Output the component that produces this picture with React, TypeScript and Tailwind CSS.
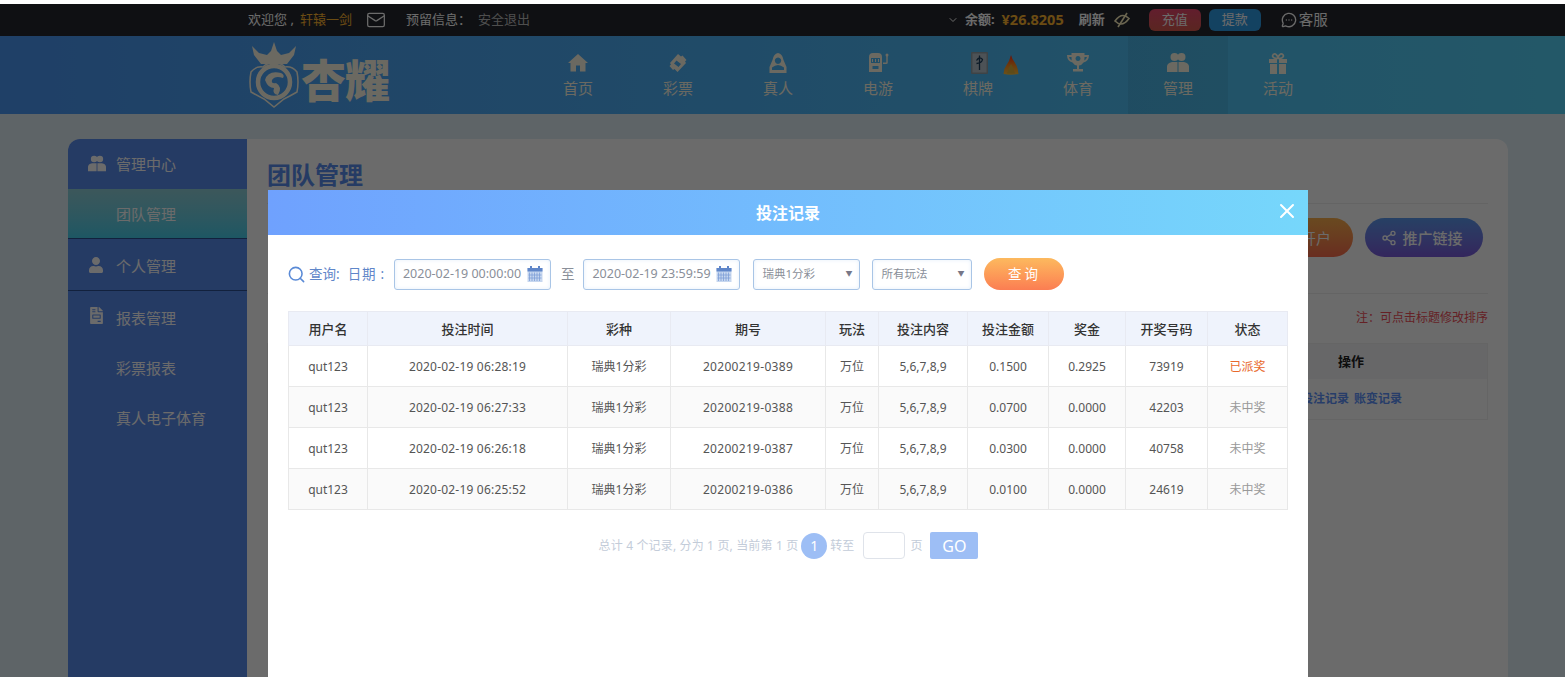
import React from "react";
import { ChevronDown, Mail, MessageCircleMore, Search, Share2, X } from "lucide-react";
import { FaUser, FaFileInvoice } from "react-icons/fa";

const HomeIcon = () => (
   <svg width="20" height="20" viewBox="0 0 20 20" fill="currentColor">
      <path d="M10 1 L20 10 L17.5 10 V18.5 H12 V12.5 H8 V18.5 H2.5 V10 H0 Z" />
   </svg>
);

const TicketIcon = () => (
   <svg width="20" height="20" viewBox="0 0 20 20" fill="currentColor">
      <path d="M10 1 L13 3.5 L14.5 2.5 L18.5 7 L17 8.5 L18 10 L9.5 19 L6.5 16 L5 17 L1.5 13 L3 11.5 L2 10 Z M8.5 7.5 L6 10.5 L10.5 14 L13 11 Z" fillRule="evenodd" />
   </svg>
);

const LiveIcon = () => (
   <svg width="18" height="21" viewBox="0 0 18 21" fill="currentColor">
      <path d="M9 0 Q13.5 1 14.5 7 L17.5 14 V20 H0.5 V14 L3.5 7 Q4.5 1 9 0 Z M9 4.5 a3.2 3.2 0 1 0 .01 0 Z M3 14.5 Q9 9.5 15 14.5 V17 H3 Z" fillRule="evenodd" />
   </svg>
);

const SlotIcon = () => (
   <svg width="22" height="20" viewBox="0 0 22 20" fill="currentColor">
      <path d="M2 4 Q2 0 6 0 H11 Q15 0 15 4 V19 H2 Z M4 5 V10 H13 V5 Z M5.5 13 V16 H11.5 V13 Z" fillRule="evenodd" />
      <path d="M5.5 6 V9 M8.5 6 V9 M11.5 6 V9" stroke="currentColor" strokeWidth="1" />
      <circle cx="20" cy="2" r="1.5" />
      <path d="M19.3 3 H20.7 V10 Q20.7 11 19 11 H16 V9.5 H19.3 Z" />
   </svg>
);

const CardIcon = () => (
   <svg width="17" height="22" viewBox="0 0 17 22" className="ml-[3px]">
      <rect x="0" y="0" width="17" height="22" rx="1" fill="#93a0a8" />
      <rect x="1.5" y="1.5" width="14" height="19" fill="#b8c4cc" />
      <path d="M8.5 3.5 V18 M5.5 8.5 Q8.5 4 11.5 7.5 Q11 11 5.5 11.5" stroke="#1d3f5e" strokeWidth="1.3" fill="none" />
   </svg>
);

const FlameIcon = () => (
   <svg width="16" height="20" viewBox="0 0 16 20" className="absolute top-[3px] left-[35px]">
      <defs>
         <linearGradient id="flame" x1="0" y1="0" x2="0" y2="1">
            <stop offset="0" stopColor="#ff2d1a" />
            <stop offset="0.5" stopColor="#ff8a1f" />
            <stop offset="1" stopColor="#ffc43a" />
         </linearGradient>
      </defs>
      <path d="M8 0 Q9 4 11.5 7 Q15 12 15.5 19 Q8 20.5 0.5 19 Q0.5 14 3.5 10 Q6.5 6 8 0 Z" fill="url(#flame)" />
      <path d="M8 9 Q11 13 12 18.5 H4 Q5 13 8 9 Z" fill="#e0b23a" />
   </svg>
);

const TrophyIcon = () => (
   <svg width="22" height="20" viewBox="0 0 22 20" fill="currentColor">
      <path d="M4.5 0 H17.5 V2 H22 Q22 8 16.5 9.5 Q15 12 12 12.5 V16 H16 V18.5 H6 V16 H10 V12.5 Q7 12 5.5 9.5 Q0 8 0 2 H4.5 Z M2 4 Q2.5 6.5 4.7 7.5 L4.5 4 Z M20 4 H17.5 L17.3 7.5 Q19.5 6.5 20 4 Z M11 3 a2.5 2.5 0 1 0 .01 0 Z" fillRule="evenodd" />
   </svg>
);

const UsersIcon = ({ size = 22 }: { size?: number }) => (
   <svg width={size} height={size} viewBox="0 0 22 22" fill="currentColor">
      <circle cx="7.5" cy="5" r="4" />
      <circle cx="14.5" cy="5" r="4" />
      <path d="M5 10 H10.5 V20 H0 V14.5 Q0 11 5 10 Z M11.5 10 H17 Q22 11 22 14.5 V20 H11.5 Z" />
   </svg>
);

const GiftIcon = () => (
   <svg width="20" height="21" viewBox="0 0 20 21" fill="currentColor">
      <path d="M1 6 H9 V10 H1 Z M11 6 H19 V10 H11 Z M2 11 H9 V21 H2 Z M11 11 H18 V21 H11 Z" />
      <path d="M10 5.5 Q5 5.5 4.5 3 Q5 0.5 7.5 1 Q9.5 2 10 5.5 Q10.5 2 12.5 1 Q15 0.5 15.5 3 Q15 5.5 10 5.5" fill="none" stroke="currentColor" strokeWidth="1.6" />
   </svg>
);

const SlashedEye = () => (
   <svg width="16" height="16" viewBox="0 0 16 16" fill="none" stroke="#fff2c0" strokeWidth="1.6" className="ml-[9px]">
      <path d="M1 9 Q5 3.5 9 3.5 Q12 3.5 15 6.5 Q11 12 7 12 Q4 12 1 9 Z" />
      <path d="M4 15 L13 1" />
   </svg>
);

const CalendarIcon = () => (
   <svg width="16" height="16" viewBox="0 0 16 16" className="text-[#5f86c9]">
      <rect x="0.5" y="2" width="15" height="14" fill="#c7d7ef" />
      <rect x="0.5" y="2" width="15" height="3.5" fill="currentColor" />
      <rect x="3" y="0" width="2" height="4" fill="currentColor" />
      <rect x="11" y="0" width="2" height="4" fill="currentColor" />
      <path d="M2.5 6.5 V15 M5 6.5 V15 M7.5 6.5 V15 M10 6.5 V15 M12.5 6.5 V15 M1.5 9 H14.5 M1.5 12 H14.5" stroke="#7d9fd8" strokeWidth="0.8" />
   </svg>
);

const Logo = () => (
   <div className="flex items-start text-[#fffbe8]">
      <svg width="52" height="66" viewBox="0 0 52 66" fill="none" stroke="currentColor" className="shrink-0">
         <path d="M26 0 L29 9 L33 13 L41 11 L48 4 L46 13 L39 22 H13 L6 13 L4 4 L11 11 L19 13 L23 9 Z" fill="currentColor" stroke="none" />
         <path d="M26 20 Q33 21 37 25 Q44 24 49 30 Q51 40 49 50 Q42 54 36 57 L26 65 L16 57 Q10 54 3 50 Q1 40 3 30 Q8 24 15 25 Q19 21 26 20 Z" strokeWidth="1.5" />
         <circle cx="26" cy="40" r="16" strokeWidth="4.5" />
         <path d="M17 38 Q20 28 33 31 Q37 33 35 36 Q27 33 24 38 Q23 42 28 41 Q35 45 30 53 Q24 52 26 46 Q20 46 17 38 Z" fill="currentColor" stroke="none" />
      </svg>
      <span className="mt-[16px] ml-[1px] text-[45px] leading-[46px] font-black tracking-[-1px]">杏耀</span>
   </div>
);

const navItems: { label: string; icon: React.ReactNode; active?: boolean }[] = [
   { label: "首页", icon: <HomeIcon /> },
   { label: "彩票", icon: <TicketIcon /> },
   { label: "真人", icon: <LiveIcon /> },
   { label: "电游", icon: <SlotIcon /> },
   {
      label: "棋牌",
      icon: (
         <span className="relative block">
            <CardIcon />
            <FlameIcon />
         </span>
      ),
   },
   { label: "体育", icon: <TrophyIcon /> },
   { label: "管理", icon: <UsersIcon />, active: true },
   { label: "活动", icon: <GiftIcon /> },
];

const rows = [
   ["2020-02-19 06:28:19", "20200219-0389", "0.1500", "0.2925", "73919", "已派奖"],
   ["2020-02-19 06:27:33", "20200219-0388", "0.0700", "0.0000", "42203", "未中奖"],
   ["2020-02-19 06:26:18", "20200219-0387", "0.0300", "0.0000", "40758", "未中奖"],
   ["2020-02-19 06:25:52", "20200219-0386", "0.0100", "0.0000", "24619", "未中奖"],
];

const headers: [string, string][] = [
   ["用户名", "w-[79px]"],
   ["投注时间", "w-[200px]"],
   ["彩种", "w-[103px]"],
   ["期号", "w-[155px]"],
   ["玩法", "w-[53px]"],
   ["投注内容", "w-[89px]"],
   ["投注金额", "w-[81px]"],
   ["奖金", "w-[77px]"],
   ["开奖号码", "w-[82px]"],
   ["状态", "w-[80px]"],
];

const DateInput = ({ value }: { value: string }) => (
   <div className="flex h-[31px] w-[157px] items-center justify-between rounded-[3px] border border-[#a9c5e6] pr-[7px] pl-[8px] text-[12.5px] text-[#8a8f99] shadow-[inset_0_0_4px_#e6f0fb]">
      <span>{value}</span>
      <CalendarIcon />
   </div>
);

const FakeSelect = ({ value, width }: { value: string; width: string }) => (
   <div className={`flex h-[31px] ${width} items-center justify-between rounded-[3px] border border-[#a9c5e6] pr-[7px] pl-[8px] text-[11.5px] text-[#8a8f99] shadow-[inset_0_0_4px_#e6f0fb]`}>
      <span>{value}</span>
      <span className="text-[7px] text-[#778]">▼</span>
   </div>
);

const Modal = () => (
   <div className="absolute top-[186px] left-[268px] h-[600px] w-[1040px] bg-white">
      <div className="relative flex h-[45px] items-center justify-center bg-gradient-to-r from-[#6fa1fe] to-[#76d7fb] text-[16px] font-bold text-white">
         投注记录
         <X size={24} strokeWidth={2} className="absolute top-[9px] right-[9px]" />
      </div>
      <div className="px-[20px] pt-[23px]">
         <div className="flex items-center text-[#5f86c9]">
            <Search size={19} strokeWidth={2} className="-ml-[1px] text-[#5a8ad6]" />
            <span className="ml-[3px] text-[13.5px]">查询:</span>
            <span className="mr-[9px] ml-[8px] text-[13.5px] tracking-[0.8px]">日期 :</span>
            <DateInput value="2020-02-19 00:00:00" />
            <span className="mr-[9px] ml-[10px] text-[13.5px] text-[#8a8f99]">至</span>
            <DateInput value="2020-02-19 23:59:59" />
            <div className="ml-[13px]">
               <FakeSelect value="瑞典1分彩" width="w-[107px]" />
            </div>
            <div className="ml-[12px]">
               <FakeSelect value="所有玩法" width="w-[100px]" />
            </div>
            <button className="ml-[12px] h-[32px] w-[80px] rounded-full bg-gradient-to-b from-[#fcb95e] to-[#fb7d52] text-[13.5px] tracking-[3px] text-white">
               查询
            </button>
         </div>
         <table className="mt-[21px] w-[1000px] table-fixed border-collapse text-center text-[12px] text-[#555]">
            <thead>
               <tr className="h-[34px] bg-[#eff3fc] text-[13px] font-medium text-[#333]">
                  {headers.map(([label, width]) => (
                     <th key={label} className={`${width} border border-[#e8eaf2] pt-[2px] font-medium`}>
                        {label}
                     </th>
                  ))}
               </tr>
            </thead>
            <tbody>
               {rows.map((row, i) => (
                  <tr key={row[1]} className={`h-[41px] ${i % 2 === 1 ? "bg-[#fafafa]" : "bg-white"} [&>td]:border [&>td]:border-[#e8e8e8] [&>td]:pt-[2px]`}>
                     <td>qut123</td>
                     <td className="tracking-[0.2px]">{row[0]}</td>
                     <td>瑞典1分彩</td>
                     <td className="tracking-[0.3px]">{row[1]}</td>
                     <td>万位</td>
                     <td>5,6,7,8,9</td>
                     <td>{row[2]}</td>
                     <td>{row[3]}</td>
                     <td>{row[4]}</td>
                     <td className={i === 0 ? "text-[#e8692c]" : "text-[#999]"}>{row[5]}</td>
                  </tr>
               ))}
            </tbody>
         </table>
         <div className="mt-[22px] flex items-center justify-center pl-[1px] text-[12px] text-[#c3ccd9]">
            <span className="tracking-[0.15px]">总计 4 个记录, 分为 1 页, 当前第 1 页</span>
            <span className="ml-[3px] flex h-[26px] w-[26px] items-center justify-center rounded-full bg-[#9dbef5] text-[14px] text-white">1</span>
            <span className="ml-[3px]">转至</span>
            <span className="mr-[5px] ml-[9px] h-[27px] w-[42px] rounded-[4px] border border-[#dfe3ea]" />
            <span>页</span>
            <span className="ml-[8px] flex h-[27px] w-[48px] items-center justify-center rounded-[2px] bg-[#9dbef5] text-[16px] text-white">GO</span>
         </div>
      </div>
   </div>
);

const SideRow = ({ label, icon, className = "" }: { label: string; icon?: React.ReactNode; className?: string }) => (
   <div className={`relative flex h-[50px] items-center pl-[48px] text-[15px] text-white ${className}`}>
      {icon && <span className="absolute top-[16px] left-[20px]">{icon}</span>}
      {label}
   </div>
);

const App: React.FC = (): JSX.Element => (
   <div className="h-[677px] w-[1565px] overflow-hidden bg-white font-['Noto_Sans','Noto_Sans_CJK_SC',sans-serif]">
      <div className="h-[4px] bg-white" />
      <div className="relative h-[673px] overflow-hidden bg-[#dfeff6]">
         <div className="flex h-[32px] items-center bg-[#25282e] pl-[248px] text-[13px] text-white">
            <span>欢迎您 ,</span>
            <span className="ml-[6px] text-[#ffb52e]">轩辕一剑</span>
            <Mail size={20} strokeWidth={1.5} className="ml-[14px]" />
            <span className="ml-[20px]">预留信息：</span>
            <span className="ml-[7px] text-[#bbb]">安全退出</span>
            <ChevronDown size={12} className="ml-[417px]" />
            <span className="ml-[6px] font-bold">余额:</span>
            <span className="ml-[7px] text-[14.5px] font-bold text-[#ffb52e]">¥26.8205</span>
            <span className="ml-[15px] font-bold">刷新</span>
            <SlashedEye />
            <span className="ml-[19px] flex h-[22px] w-[52px] items-center justify-center rounded-[6px] bg-gradient-to-b from-[#e8476d] to-[#d85a4e]">充值</span>
            <span className="ml-[8px] flex h-[22px] w-[52px] items-center justify-center rounded-[6px] bg-[#2f9de8]">提款</span>
            <MessageCircleMore size={16} className="ml-[20px]" />
            <span className="ml-[2px] text-[14.5px]">客服</span>
         </div>
         <div className="flex h-[78px] bg-gradient-to-r from-[#4a98f5] to-[#54d2f8] pl-[248px]">
            <div className="w-[280px] pt-[6px]">
               <Logo />
            </div>
            {navItems.map((item) => (
               <div key={item.label} className={`flex w-[100px] flex-col items-center text-[#fffbe8] ${item.active ? "bg-black/[0.06]" : ""}`}>
                  <span className="mt-[15px] flex h-[24px] items-center">{item.icon}</span>
                  <span className="mt-[1px] text-[15px] leading-[24px]">{item.label}</span>
               </div>
            ))}
         </div>
         <div className="px-[68px] pt-[25px]">
            <div className="flex h-[700px] w-[1440px] overflow-hidden rounded-[12px] bg-white">
               <div className="w-[179px] shrink-0 bg-[#5a8cee]">
                  <SideRow label="管理中心" icon={<UsersIcon size={18} />} />
                  <SideRow label="团队管理" className="border-b border-[#2c4f92] bg-gradient-to-b from-[#8fd0d8] to-[#46d0ec] pt-[2px]" />
                  <SideRow label="个人管理" icon={<FaUser size={16} className="mt-[2px]" />} className="h-[52px] border-b border-[#2c4f92] pt-[3px]" />
                  <SideRow label="报表管理" icon={<FaFileInvoice size={17} />} className="h-[52px] pt-[2px]" />
                  <SideRow label="彩票报表" />
                  <SideRow label="真人电子体育" />
               </div>
               <div className="flex-1 pt-[18px] pr-[20px] pl-[20px]">
                  <div className="border-b border-[#eee] pb-[10px] text-[24px] leading-[36px] font-bold text-[#5a8cee]">团队管理</div>
                  <div className="flex justify-end gap-[12px] border-b border-[#eee] pt-[14px] pr-[5px] pb-[36px]">
                     <span className="flex h-[39px] w-[120px] items-center justify-end rounded-full bg-gradient-to-b from-[#fbb04c] to-[#f96b4c] pt-[1px] pr-[22px] text-[15px] text-white">开户</span>
                     <span className="flex h-[39px] w-[118px] items-center justify-center gap-[5px] rounded-full bg-gradient-to-b from-[#5b9af0] to-[#7a5bdc] pt-[1px] pr-[4px] text-[15px] font-medium text-white">
                        <Share2 size={16} />
                        推广链接
                     </span>
                  </div>
                  <div className="pt-[15px] text-right text-[12px] text-[#f0505a]">注：可点击标题修改排序</div>
                  <div className="mt-[16px] border border-[#f0f0f0] text-[13px]">
                     <div className="flex h-[35px] items-center justify-end bg-[#f5f5f8] pr-[123px] font-bold text-[#222]">操作</div>
                     <div className="flex h-[40px] items-center justify-end gap-[5px] pr-[85px] text-[12px] font-bold text-[#5e92fb]">
                        <span>投注记录</span>
                        <span>账变记录</span>
                     </div>
                  </div>
               </div>
            </div>
         </div>
         <div className="absolute inset-0 bg-black/[0.58]" />
         <Modal />
      </div>
   </div>
);

export default App;
